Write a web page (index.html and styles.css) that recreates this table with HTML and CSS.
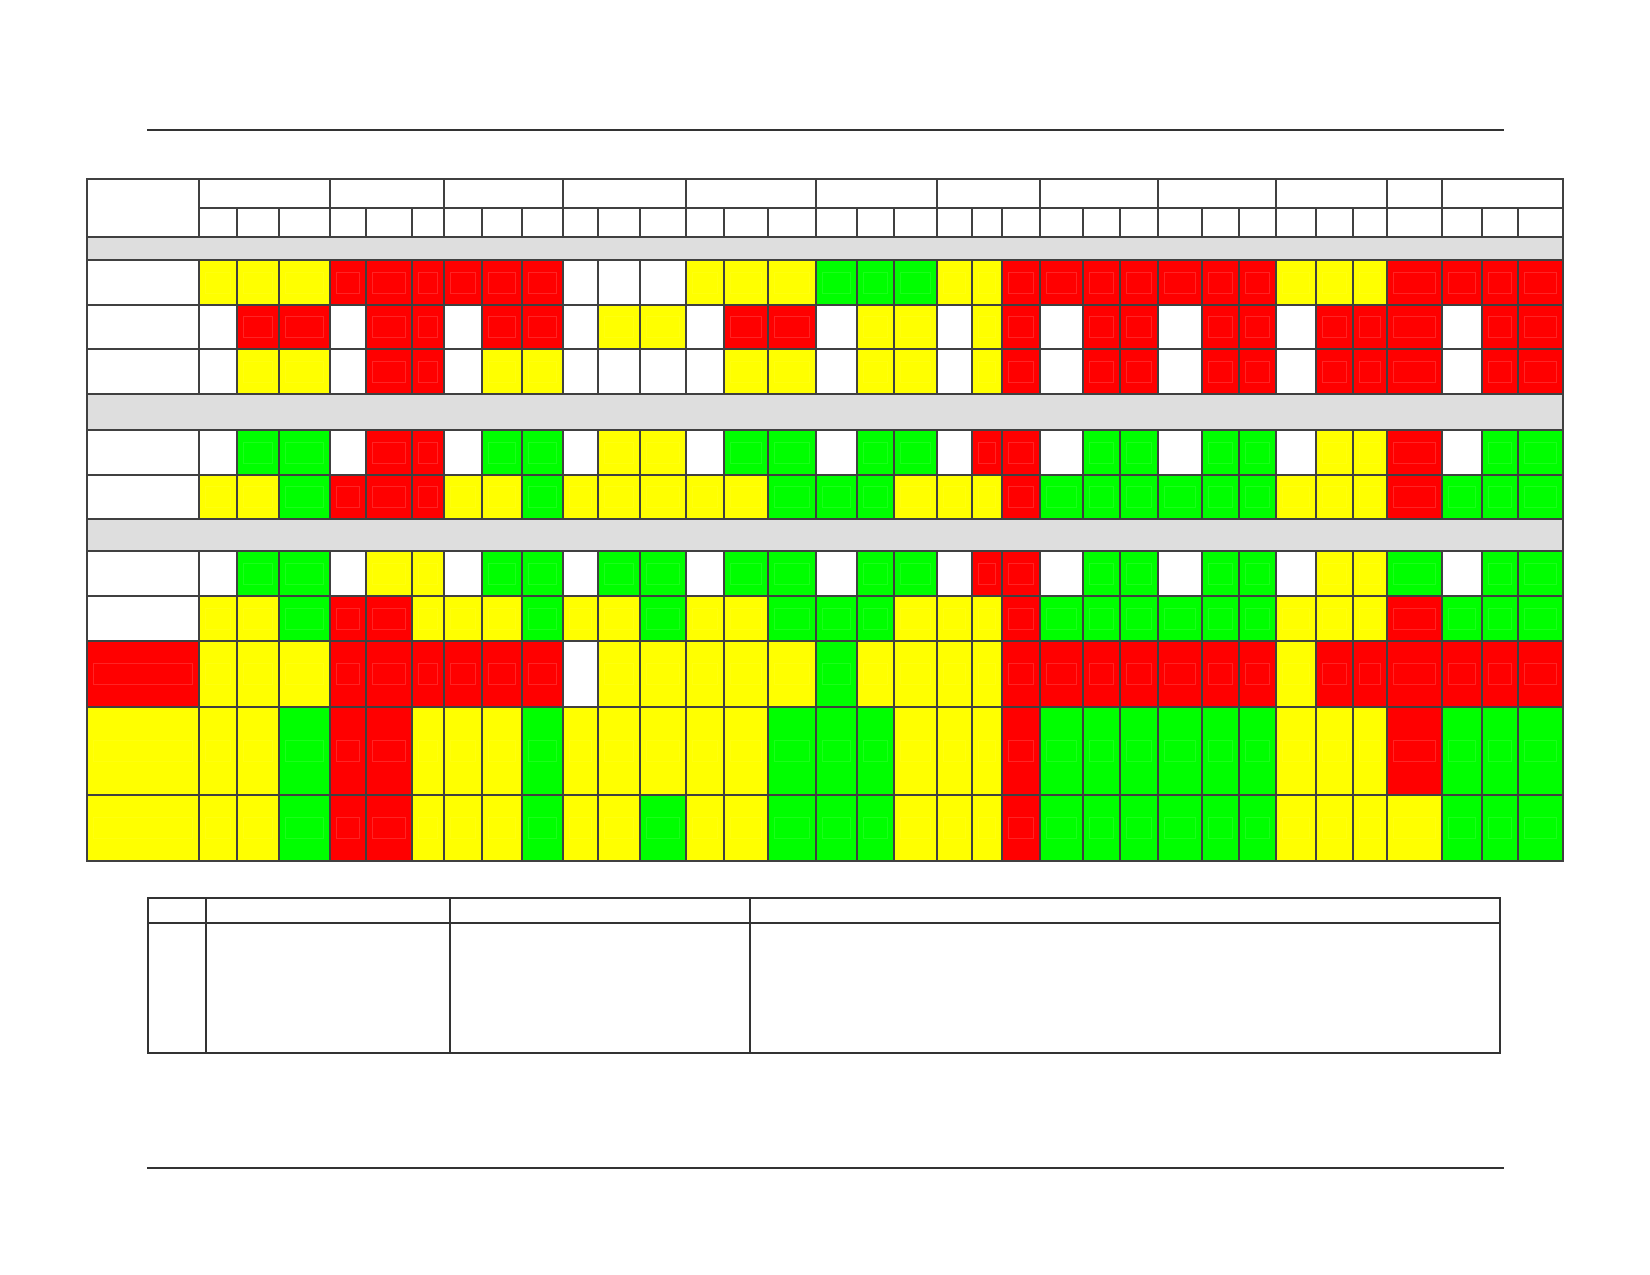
FILE: index.html
```html
<!DOCTYPE html>
<html lang="en">
<head>
<meta charset="utf-8">
<title>Status matrix</title>
<link rel="stylesheet" href="styles.css">
</head>
<body>
<div class="page">
  <div class="rule"></div>

  <div class="sheet">
    <!-- header row 1 -->
    <div class="cell corner"></div>
    <div class="cell s3"></div><div class="cell s3"></div><div class="cell s3"></div><div class="cell s3"></div>
    <div class="cell s3"></div><div class="cell s3"></div><div class="cell s3"></div><div class="cell s3"></div>
    <div class="cell s3"></div><div class="cell s3"></div><div class="cell"></div><div class="cell s3"></div>
    <!-- header row 2 -->
    <div class="cell"></div><div class="cell"></div><div class="cell"></div><div class="cell"></div><div class="cell"></div><div class="cell"></div>
    <div class="cell"></div><div class="cell"></div><div class="cell"></div><div class="cell"></div><div class="cell"></div><div class="cell"></div>
    <div class="cell"></div><div class="cell"></div><div class="cell"></div><div class="cell"></div><div class="cell"></div><div class="cell"></div>
    <div class="cell"></div><div class="cell"></div><div class="cell"></div><div class="cell"></div><div class="cell"></div><div class="cell"></div>
    <div class="cell"></div><div class="cell"></div><div class="cell"></div><div class="cell"></div><div class="cell"></div><div class="cell"></div>
    <div class="cell"></div><div class="cell"></div><div class="cell"></div><div class="cell"></div>

    <div class="cell band"></div>

    <!-- row 1 -->
    <div class="cell"></div>
    <div class="cell y"></div><div class="cell y"></div><div class="cell y"></div>
    <div class="cell r"></div><div class="cell r"></div><div class="cell r"></div>
    <div class="cell r"></div><div class="cell r"></div><div class="cell r"></div>
    <div class="cell"></div><div class="cell"></div><div class="cell"></div>
    <div class="cell y"></div><div class="cell y"></div><div class="cell y"></div>
    <div class="cell g"></div><div class="cell g"></div><div class="cell g"></div>
    <div class="cell y"></div><div class="cell y"></div><div class="cell r"></div>
    <div class="cell r"></div><div class="cell r"></div><div class="cell r"></div>
    <div class="cell r"></div><div class="cell r"></div><div class="cell r"></div>
    <div class="cell y"></div><div class="cell y"></div><div class="cell y"></div>
    <div class="cell r"></div>
    <div class="cell r"></div><div class="cell r"></div><div class="cell r"></div>
    <!-- row 2 -->
    <div class="cell"></div>
    <div class="cell"></div><div class="cell r"></div><div class="cell r"></div>
    <div class="cell"></div><div class="cell r"></div><div class="cell r"></div>
    <div class="cell"></div><div class="cell r"></div><div class="cell r"></div>
    <div class="cell"></div><div class="cell y"></div><div class="cell y"></div>
    <div class="cell"></div><div class="cell r"></div><div class="cell r"></div>
    <div class="cell"></div><div class="cell y"></div><div class="cell y"></div>
    <div class="cell"></div><div class="cell y"></div><div class="cell r"></div>
    <div class="cell"></div><div class="cell r"></div><div class="cell r"></div>
    <div class="cell"></div><div class="cell r"></div><div class="cell r"></div>
    <div class="cell"></div><div class="cell r"></div><div class="cell r"></div>
    <div class="cell r"></div>
    <div class="cell"></div><div class="cell r"></div><div class="cell r"></div>
    <!-- row 3 -->
    <div class="cell"></div>
    <div class="cell"></div><div class="cell y"></div><div class="cell y"></div>
    <div class="cell"></div><div class="cell r"></div><div class="cell r"></div>
    <div class="cell"></div><div class="cell y"></div><div class="cell y"></div>
    <div class="cell"></div><div class="cell"></div><div class="cell"></div>
    <div class="cell"></div><div class="cell y"></div><div class="cell y"></div>
    <div class="cell"></div><div class="cell y"></div><div class="cell y"></div>
    <div class="cell"></div><div class="cell y"></div><div class="cell r"></div>
    <div class="cell"></div><div class="cell r"></div><div class="cell r"></div>
    <div class="cell"></div><div class="cell r"></div><div class="cell r"></div>
    <div class="cell"></div><div class="cell r"></div><div class="cell r"></div>
    <div class="cell r"></div>
    <div class="cell"></div><div class="cell r"></div><div class="cell r"></div>

    <div class="cell band"></div>

    <!-- row 4 -->
    <div class="cell"></div>
    <div class="cell"></div><div class="cell g"></div><div class="cell g"></div>
    <div class="cell"></div><div class="cell r"></div><div class="cell r"></div>
    <div class="cell"></div><div class="cell g"></div><div class="cell g"></div>
    <div class="cell"></div><div class="cell y"></div><div class="cell y"></div>
    <div class="cell"></div><div class="cell g"></div><div class="cell g"></div>
    <div class="cell"></div><div class="cell g"></div><div class="cell g"></div>
    <div class="cell"></div><div class="cell r"></div><div class="cell r"></div>
    <div class="cell"></div><div class="cell g"></div><div class="cell g"></div>
    <div class="cell"></div><div class="cell g"></div><div class="cell g"></div>
    <div class="cell"></div><div class="cell y"></div><div class="cell y"></div>
    <div class="cell r"></div>
    <div class="cell"></div><div class="cell g"></div><div class="cell g"></div>
    <!-- row 5 -->
    <div class="cell"></div>
    <div class="cell y"></div><div class="cell y"></div><div class="cell g"></div>
    <div class="cell r"></div><div class="cell r"></div><div class="cell r"></div>
    <div class="cell y"></div><div class="cell y"></div><div class="cell g"></div>
    <div class="cell y"></div><div class="cell y"></div><div class="cell y"></div>
    <div class="cell y"></div><div class="cell y"></div><div class="cell g"></div>
    <div class="cell g"></div><div class="cell g"></div><div class="cell y"></div>
    <div class="cell y"></div><div class="cell y"></div><div class="cell r"></div>
    <div class="cell g"></div><div class="cell g"></div><div class="cell g"></div>
    <div class="cell g"></div><div class="cell g"></div><div class="cell g"></div>
    <div class="cell y"></div><div class="cell y"></div><div class="cell y"></div>
    <div class="cell r"></div>
    <div class="cell g"></div><div class="cell g"></div><div class="cell g"></div>

    <div class="cell band"></div>

    <!-- row 6 -->
    <div class="cell"></div>
    <div class="cell"></div><div class="cell g"></div><div class="cell g"></div>
    <div class="cell"></div><div class="cell y"></div><div class="cell y"></div>
    <div class="cell"></div><div class="cell g"></div><div class="cell g"></div>
    <div class="cell"></div><div class="cell g"></div><div class="cell g"></div>
    <div class="cell"></div><div class="cell g"></div><div class="cell g"></div>
    <div class="cell"></div><div class="cell g"></div><div class="cell g"></div>
    <div class="cell"></div><div class="cell r"></div><div class="cell r"></div>
    <div class="cell"></div><div class="cell g"></div><div class="cell g"></div>
    <div class="cell"></div><div class="cell g"></div><div class="cell g"></div>
    <div class="cell"></div><div class="cell y"></div><div class="cell y"></div>
    <div class="cell g"></div>
    <div class="cell"></div><div class="cell g"></div><div class="cell g"></div>
    <!-- row 7 -->
    <div class="cell"></div>
    <div class="cell y"></div><div class="cell y"></div><div class="cell g"></div>
    <div class="cell r"></div><div class="cell r"></div><div class="cell y"></div>
    <div class="cell y"></div><div class="cell y"></div><div class="cell g"></div>
    <div class="cell y"></div><div class="cell y"></div><div class="cell g"></div>
    <div class="cell y"></div><div class="cell y"></div><div class="cell g"></div>
    <div class="cell g"></div><div class="cell g"></div><div class="cell y"></div>
    <div class="cell y"></div><div class="cell y"></div><div class="cell r"></div>
    <div class="cell g"></div><div class="cell g"></div><div class="cell g"></div>
    <div class="cell g"></div><div class="cell g"></div><div class="cell g"></div>
    <div class="cell y"></div><div class="cell y"></div><div class="cell y"></div>
    <div class="cell r"></div>
    <div class="cell g"></div><div class="cell g"></div><div class="cell g"></div>
    <!-- row 8 -->
    <div class="cell r label"></div>
    <div class="cell y"></div><div class="cell y"></div><div class="cell y"></div>
    <div class="cell r"></div><div class="cell r"></div><div class="cell r"></div>
    <div class="cell r"></div><div class="cell r"></div><div class="cell r"></div>
    <div class="cell"></div><div class="cell y"></div><div class="cell y"></div>
    <div class="cell y"></div><div class="cell y"></div><div class="cell y"></div>
    <div class="cell g"></div><div class="cell y"></div><div class="cell y"></div>
    <div class="cell y"></div><div class="cell y"></div><div class="cell r"></div>
    <div class="cell r"></div><div class="cell r"></div><div class="cell r"></div>
    <div class="cell r"></div><div class="cell r"></div><div class="cell r"></div>
    <div class="cell y"></div><div class="cell r"></div><div class="cell r"></div>
    <div class="cell r"></div>
    <div class="cell r"></div><div class="cell r"></div><div class="cell r"></div>
    <!-- row 9 -->
    <div class="cell y label"></div>
    <div class="cell y"></div><div class="cell y"></div><div class="cell g"></div>
    <div class="cell r"></div><div class="cell r"></div><div class="cell y"></div>
    <div class="cell y"></div><div class="cell y"></div><div class="cell g"></div>
    <div class="cell y"></div><div class="cell y"></div><div class="cell y"></div>
    <div class="cell y"></div><div class="cell y"></div><div class="cell g"></div>
    <div class="cell g"></div><div class="cell g"></div><div class="cell y"></div>
    <div class="cell y"></div><div class="cell y"></div><div class="cell r"></div>
    <div class="cell g"></div><div class="cell g"></div><div class="cell g"></div>
    <div class="cell g"></div><div class="cell g"></div><div class="cell g"></div>
    <div class="cell y"></div><div class="cell y"></div><div class="cell y"></div>
    <div class="cell r"></div>
    <div class="cell g"></div><div class="cell g"></div><div class="cell g"></div>
    <!-- row 10 -->
    <div class="cell y label"></div>
    <div class="cell y"></div><div class="cell y"></div><div class="cell g"></div>
    <div class="cell r"></div><div class="cell r"></div><div class="cell y"></div>
    <div class="cell y"></div><div class="cell y"></div><div class="cell g"></div>
    <div class="cell y"></div><div class="cell y"></div><div class="cell g"></div>
    <div class="cell y"></div><div class="cell y"></div><div class="cell g"></div>
    <div class="cell g"></div><div class="cell g"></div><div class="cell y"></div>
    <div class="cell y"></div><div class="cell y"></div><div class="cell r"></div>
    <div class="cell g"></div><div class="cell g"></div><div class="cell g"></div>
    <div class="cell g"></div><div class="cell g"></div><div class="cell g"></div>
    <div class="cell y"></div><div class="cell y"></div><div class="cell y"></div>
    <div class="cell y"></div>
    <div class="cell g"></div><div class="cell g"></div><div class="cell g"></div>
  </div>

  <div class="legend">
    <div class="lcell"></div><div class="lcell"></div><div class="lcell"></div><div class="lcell"></div>
    <div class="lcell"></div><div class="lcell"></div><div class="lcell"></div><div class="lcell"></div>
  </div>

  <div class="rule rule-bottom"></div>
</div>
</body>
</html>
```
FILE: styles.css
```css
html, body {
  margin: 0;
  padding: 0;
  background: #ffffff;
  font-family: "Liberation Sans", Arial, sans-serif;
}

.page {
  padding-top: 129px;
}

.rule {
  width: 1357px;
  height: 2px;
  margin-left: 147px;
  background: #333333;
}

.rule-bottom {
  margin-top: 113px;
}

/* main status matrix */
.sheet {
  display: grid;
  width: max-content;
  margin-top: 47px;
  margin-left: 86px;
  padding: 2px;
  gap: 2px;
  background: #404040;
  grid-template-columns:
    110px
    36px 40px 49px
    34px 44px 30px
    36px 38px 39px
    33px 40px 44px
    36px 42px 46px
    39px 35px 41px
    33px 28px 36px
    41px 35px 36px
    42px 35px 35px
    38px 35px 32px
    53px
    38px 34px 43px;
  grid-template-rows:
    27px 27px 21px
    43px 42px 43px
    34px
    43px 42px
    30px
    43px 43px 64px 86px 64px;
}

.cell {
  background: #ffffff;
  display: flex;
  align-items: center;
}

.corner {
  grid-row: span 2;
}

.s3 {
  grid-column: span 3;
}

.band {
  grid-column: 1 / -1;
  background: #dedede;
}

.y { background: #ffff00; }
.r { background: #ff0000; }
.g { background: #00ff00; }

.y::after,
.r::after,
.g::after {
  content: "";
  flex: 1;
  height: 22px;
  margin: 0 5px;
  box-sizing: border-box;
  border: 1px solid rgba(255, 255, 255, 0.14);
}

.g::after {
  border-color: rgba(255, 255, 255, 0.1);
}

.y::after {
  border-color: rgba(255, 255, 255, 0.06);
}

/* legend table */
.legend {
  display: grid;
  width: max-content;
  margin-top: 35px;
  margin-left: 147px;
  padding: 2px;
  gap: 2px;
  background: #333333;
  grid-template-columns: 56px 242px 298px 748px;
  grid-template-rows: 23px 128px;
}

.lcell {
  background: #ffffff;
}
```
